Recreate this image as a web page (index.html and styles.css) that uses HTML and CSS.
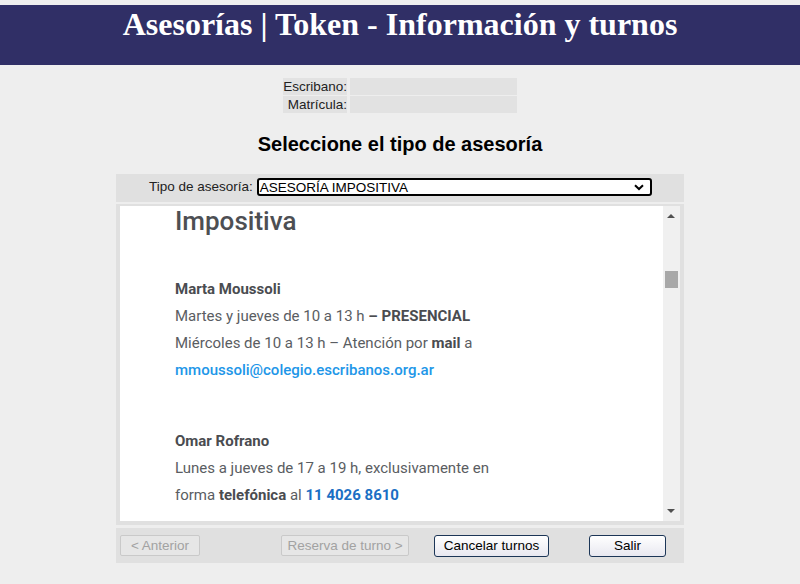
FILE: index.html
```html
<!DOCTYPE html>
<html lang="es">
<head>
    <meta charset="UTF-8">
    <title>Asesorías | Token - Información y turnos</title>
    <link rel="stylesheet" href="styles.css">
</head>
<body>
    <!-- cabecera -->
    <div class="header">
        <h1>Asesorías | Token - Información y turnos</h1>
    </div>

    <!-- datos del escribano -->
    <table class="datos">
        <tr>
            <td class="lbl">Escribano:</td>
            <td class="val"></td>
        </tr>
        <tr>
            <td class="lbl">Matrícula:</td>
            <td class="val"></td>
        </tr>
    </table>

    <h2 class="titulo">Seleccione el tipo de asesoría</h2>

    <div class="panel">
        <div class="fila-tipo">
            <label for="tipo">Tipo de asesoría:</label>
            <div class="select">
                <span>ASESORÍA IMPOSITIVA</span>
                <svg width="10" height="7" viewBox="0 0 10 7"><path d="M1 1.2 L5 5 L9 1.2" fill="none" stroke="#000" stroke-width="2"/></svg>
            </div>
        </div>

        <!-- contenido de la asesoría -->
        <div class="marco">
            <div class="contenido">
                <h3>Impositiva</h3>
                <p class="nombre">Marta Moussoli</p>
                <p>Martes y jueves de 10 a 13 h <b>– PRESENCIAL</b></p>
                <p>Miércoles de 10 a 13 h – Atención por <b>mail</b> a</p>
                <p><a href="#">mmoussoli@colegio.escribanos.org.ar</a></p>
                <p class="nombre sep">Omar Rofrano</p>
                <p>Lunes a jueves de 17 a 19 h, exclusivamente en</p>
                <p>forma <b>telefónica</b> al <a class="tel" href="#">11 4026 8610</a></p>
            </div>
            <div class="scroll">
                <span class="flecha arriba"></span>
                <span class="barra"></span>
                <span class="flecha abajo"></span>
            </div>
        </div>

        <div class="botones">
            <button class="btn b-ant" disabled>&lt; Anterior</button>
            <button class="btn b-res" disabled>Reserva de turno &gt;</button>
            <button class="btn b-can">Cancelar turnos</button>
            <button class="btn b-sal">Salir</button>
        </div>
    </div>
</body>
</html>
```

FILE: styles.css
```css
* {
    margin: 0;
    padding: 0;
}

body {
    background: #eeeeee;
    font-family: "Liberation Sans", Arial, sans-serif;
    font-size: 13px;
    color: #222;
}

/* cabecera */
.header {
    margin-top: 5px;
    height: 60px;
    background: #302f66;
}

.header h1 {
    font-family: "Liberation Serif", "Times New Roman", serif;
    font-size: 32px;
    font-weight: bold;
    color: #fff;
    text-align: center;
    line-height: 38px;
}

/* escribano / matricula */
.datos {
    margin: 12px auto 0;
    border-spacing: 3px 1px;
}

.datos td {
    height: 17px;
    background: #e2e2e2;
    padding: 0;
}

.datos .lbl {
    width: 64px;
    text-align: right;
    font-size: 13.5px;
    line-height: 17px;
}

.datos .val {
    width: 167px;
}

.titulo {
    font-size: 20px;
    font-weight: bold;
    text-align: center;
    color: #000;
    margin-top: 19px;
    line-height: 22px;
}

/* panel principal */
.panel {
    width: 568px;
    margin: 19px auto 0;
    display: flex;
    flex-direction: column;
}

.fila-tipo {
    height: 28px;
    background: #e0e0e0;
    display: flex;
    align-items: flex-start;
    padding-top: 4px;
    box-sizing: border-box;
    padding-left: 33px;
    gap: 4px;
    font-size: 13.5px;
}

.fila-tipo label {
    color: #222;
    line-height: 18px;
}

.select {
    width: 395px;
    height: 18px;
    box-sizing: border-box;
    border: 2px solid #000;
    border-radius: 3px;
    background: #fff;
    display: flex;
    align-items: center;
    justify-content: space-between;
    padding: 0 6px 0 1px;
    color: #000;
}

.marco {
    margin-top: 2px;
    background: #e0e0e0;
    padding: 2px 4px 4px;
    display: flex;
}

.contenido {
    flex: 1;
    height: 315px;
    overflow: hidden;
    background: #fff;
    padding-left: 55px;
    font-family: Roboto, "Noto Sans", sans-serif;
    font-size: 15px;
    color: #5a5d62;
}

.contenido h3 {
    font-size: 26px;
    font-weight: 500;
    color: #4d4f53;
    line-height: 30px;
    margin-top: 0;
    margin-bottom: 40px;
}

.contenido p {
    line-height: 27px;
}

.contenido b,
.contenido .nombre {
    font-weight: bold;
    color: #4a4c50;
}

.contenido .sep {
    margin-top: 44px;
}

.contenido a {
    color: #2196e8;
    font-weight: 500;
    text-decoration: none;
}

.contenido a.tel {
    color: #1a6fc4;
    font-weight: bold;
}

/* barra de desplazamiento */
.scroll {
    width: 17px;
    background: #f0f0f0;
    position: relative;
}

.flecha {
    position: absolute;
    left: 4px;
    width: 0;
    height: 0;
    border-left: 4px solid transparent;
    border-right: 4px solid transparent;
}

.arriba {
    top: 8px;
    border-bottom: 4px solid #505050;
}

.abajo {
    bottom: 8px;
    border-top: 4px solid #505050;
}

.barra {
    position: absolute;
    left: 2px;
    top: 65px;
    width: 13px;
    height: 17px;
    background: #a8a8a8;
}

/* botones */
.botones {
    margin-top: 3px;
    height: 35px;
    background: #e0e0e0;
    display: flex;
    align-items: center;
    padding-left: 4px;
}

.btn {
    height: 21px;
    font-family: "Liberation Sans", Arial, sans-serif;
    font-size: 13.5px;
    border-radius: 2px;
    border: 1px solid #c9c9c9;
    background: #e6e6e6;
    color: #a2a2a2;
}

.b-ant {
    width: 80px;
}

.b-res {
    width: 128px;
    margin-left: 81px;
}

.b-can,
.b-sal {
    height: 22px;
    border: 1px solid #1c3657;
    border-radius: 3px;
    background: linear-gradient(#ffffff, #e8e8f0);
    color: #000;
}

.b-can {
    width: 115px;
    margin-left: 25px;
}

.b-sal {
    width: 77px;
    margin-left: 40px;
}
```
